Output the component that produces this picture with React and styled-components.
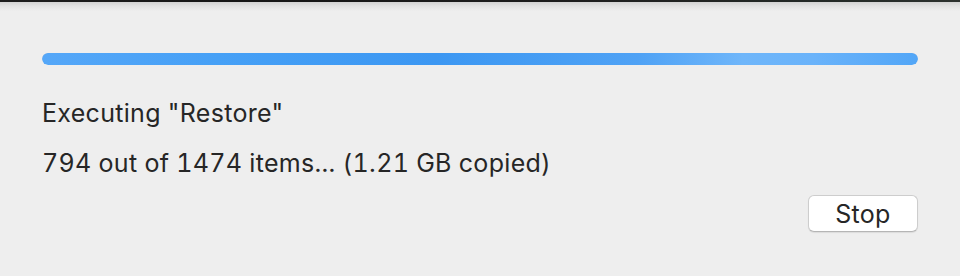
import React from "react";
import styled, { createGlobalStyle } from "styled-components";

const GlobalStyle = createGlobalStyle`
  html, body {
    margin: 0;
    padding: 0;
    background: #eeeeee;
  }
  body {
    font-family: Inter, "Liberation Sans", Arial, sans-serif;
    -webkit-font-smoothing: antialiased;
  }
`;

const Window = styled.div`
  width: 960px;
  height: 276px;
  display: flex;
  flex-direction: column;
  background: #eeeeee;
  overflow: hidden;
`;

const TopEdge = styled.div`
  height: 2px;
  flex: none;
  background: linear-gradient(
    to right,
    #1c1c1c 0%,
    #161616 29%,
    #1e1e1e 60%,
    #242a27 87%,
    #2c312e 100%
  );
`;

const TopShade = styled.div`
  height: 9px;
  flex: none;
  background: linear-gradient(to bottom, #d2d2d2, #e2e2e2 45%, #eeeeee);
`;

const Body = styled.div`
  display: flex;
  flex-direction: column;
  padding: 42px 42px 0;
`;

const Track = styled.div`
  height: 12px;
  border-radius: 6px;
  overflow: hidden;
  box-shadow: inset 0 1px 0 rgba(40, 100, 180, 0.35);
`;

const Fill = styled.div`
  height: 100%;
  border-radius: 6px;
  background: linear-gradient(
    to right,
    #55a7f8 0%,
    #46a0f6 20%,
    #3c97f2 45%,
    #4fa2f5 68%,
    #6fb6fa 80%,
    #6ab3fa 88%,
    #52a6f7 100%
  );
`;

const Line = styled.div`
  font-size: 25px;
  line-height: 28px;
  letter-spacing: 0.3px;
  color: #262626;
  margin-top: ${(p) => p.$gap}px;
  white-space: nowrap;
  font-variant-numeric: tabular-nums;
`;

const Footer = styled.div`
  display: flex;
  justify-content: flex-end;
  margin-top: 18px;
`;

const Button = styled.button`
  width: 110px;
  height: 37px;
  padding: 0;
  border: 1px solid #cdcdcd;
  border-bottom-color: #b5b5b5;
  border-radius: 6px;
  background: #ffffff;
  box-shadow: 0 1px 1px rgba(0, 0, 0, 0.08);
  font-family: Inter, "Liberation Sans", Arial, sans-serif;
  font-size: 25px;
  letter-spacing: 0.3px;
  color: #262626;
  display: flex;
  align-items: center;
  justify-content: center;
`;

export default function App() {
  const progress = 100;
  return (
    <>
      <GlobalStyle />
      <Window>
        <TopEdge />
        <TopShade />
        <Body>
          <Track>
            <Fill style={{ width: `${progress}%` }} />
          </Track>
          <Line $gap={34}>Executing "Restore"</Line>
          <Line $gap={22}>794 out of 1474 items... (1.21 GB copied)</Line>
          <Footer>
            <Button>Stop</Button>
          </Footer>
        </Body>
      </Window>
    </>
  );
}
